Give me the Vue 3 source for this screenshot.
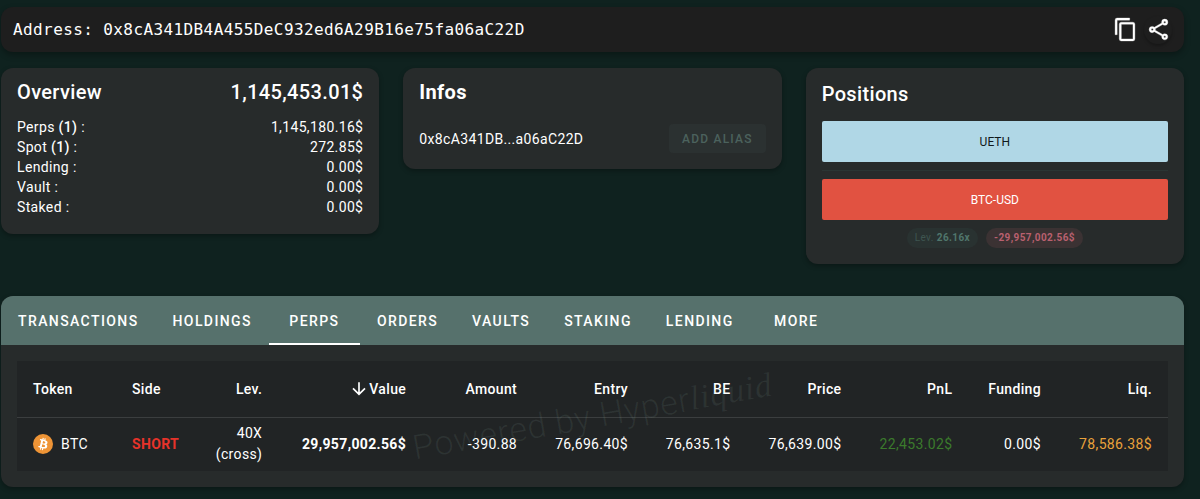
<script setup>
const balances = [
  { label: 'Perps', count: 1, value: '1,145,180.16$' },
  { label: 'Spot', count: 1, value: '272.85$' },
  { label: 'Lending', value: '0.00$' },
  { label: 'Vault', value: '0.00$' },
  { label: 'Staked', value: '0.00$' },
]
const tabs = ['Transactions', 'Holdings', 'Perps', 'Orders', 'Vaults', 'Staking', 'Lending', 'More']
const activeTab = 'Perps'
const columns = ['Token', 'Side', 'Lev.', 'Value', 'Amount', 'Entry', 'BE', 'Price', 'PnL', 'Funding', 'Liq.']
</script>

<template>
  <main class="page">
    <header class="address-bar">
      <span class="address">Address: 0x8cA341DB4A455DeC932ed6A29B16e75fa06aC22D</span>
      <div class="actions">
        <button type="button" class="icon-button" aria-label="Copy address">
          <svg viewBox="0 0 24 24"><path d="M19 21H8V7h11m0-2H8a2 2 0 0 0-2 2v14a2 2 0 0 0 2 2h11a2 2 0 0 0 2-2V7a2 2 0 0 0-2-2m-3-4H4a2 2 0 0 0-2 2v14h2V3h12V1z" /></svg>
        </button>
        <button type="button" class="icon-button raised" aria-label="Share">
          <svg viewBox="0 0 24 24"><path d="M18 16.080c-.76 0-1.440.3-1.960.77L8.910 12.700c.05-.23.09-.46.09-.7s-.04-.47-.09-.7l7.050-4.110c.54.5 1.250.81 2.040.81a3 3 0 1 0-3-3c0 .24.04.47.09.7L8.040 9.810A2.990 2.990 0 0 0 6 9a3 3 0 1 0 0 6c.79 0 1.500-.31 2.040-.81l7.120 4.150c-.05.21-.08.43-.08.66 0 1.610 1.310 2.910 2.920 2.910s2.920-1.300 2.920-2.910A2.920 2.920 0 0 0 18 16.080M18 4a1 1 0 1 1 0 2 1 1 0 0 1 0-2M6 13a1 1 0 1 1 0-2 1 1 0 0 1 0 2m12 7.020a1 1 0 1 1 0-2 1 1 0 0 1 0 2" /></svg>
        </button>
      </div>
    </header>

    <div class="cards">
      <section class="card overview">
        <div class="card-head">
          <h2>Overview</h2>
          <span class="total">1,145,453.01$</span>
        </div>
        <dl class="balances">
          <div v-for="b in balances" :key="b.label" class="balance">
            <dt>{{ b.label }} <b v-if="b.count">({{ b.count }})</b> :</dt>
            <dd>{{ b.value }}</dd>
          </div>
        </dl>
      </section>

      <section class="card">
        <h2 class="strong">Infos</h2>
        <div class="alias">
          <span>0x8cA341DB...a06aC22D</span>
          <button type="button" class="alias-button">ADD ALIAS</button>
        </div>
      </section>

      <section class="card positions">
        <h2>Positions</h2>
        <button type="button" class="position spot">UETH</button>
        <hr />
        <button type="button" class="position short">BTC-USD</button>
        <div class="chips">
          <span class="chip lev">Lev. <b>26.16x</b></span>
          <span class="chip size"><b>-29,957,002.56$</b></span>
        </div>
      </section>
    </div>

    <section class="panel">
      <nav class="tabs" role="tablist">
        <button
          v-for="t in tabs"
          :key="t"
          type="button"
          role="tab"
          class="tab"
          :class="{ active: t === activeTab }"
          :aria-selected="t === activeTab"
        >{{ t }}</button>
      </nav>
      <div class="table-wrap">
        <table>
          <colgroup>
            <col class="w-token" /><col class="w-side" /><col class="w-lev" /><col class="w-value" />
            <col class="w-num" /><col class="w-num" /><col class="w-be" /><col class="w-num" />
            <col class="w-num" /><col class="w-fund" /><col class="w-num" />
          </colgroup>
          <thead>
            <tr>
              <th v-for="c in columns" :key="c" scope="col">
                <svg v-if="c === 'Value'" class="sort" viewBox="0 0 24 24"><path d="M11 4h2v12l5.500-5.500 1.420 1.420L12 19.840l-7.920-7.920L5.500 10.500 11 16z" /></svg>{{ c }}
              </th>
            </tr>
          </thead>
          <tbody>
            <tr>
              <td>
                <span class="token">
                  <svg class="coin" viewBox="0 0 32 32">
                    <circle cx="16" cy="16" r="16" fill="#ee9436" />
                    <path fill="#fff" d="M23.189 14.020c.314-2.096-1.283-3.223-3.465-3.975l.708-2.840-1.728-.43-.69 2.765c-.454-.114-.92-.22-1.385-.326l.695-2.783L15.596 6l-.708 2.839c-.376-.086-.746-.17-1.104-.26l.002-.009-2.384-.595-.46 1.846s1.283.294 1.256.312c.7.175.826.638.805 1.006l-.806 3.235c.048.012.11.030.18.057l-.183-.045-1.130 4.532c-.086.212-.303.531-.793.41.018.025-1.256-.313-1.256-.313l-.858 1.978 2.250.561c.418.105.828.215 1.231.318l-.715 2.872 1.727.43.708-2.840c.472.127.930.245 1.378.357l-.706 2.828 1.728.43.715-2.866c2.948.558 5.164.333 6.097-2.333.752-2.146-.037-3.385-1.588-4.192 1.130-.26 1.980-1.003 2.207-2.538zm-3.950 5.538c-.533 2.147-4.148.986-5.320.695l.950-3.805c1.172.293 4.929.872 4.370 3.110zm.535-5.569c-.487 1.953-3.495.96-4.470.717l.860-3.450c.975.243 4.118.696 3.610 2.733z" />
                  </svg>
                  BTC
                </span>
              </td>
              <td class="side">SHORT</td>
              <td class="lev-cell">40X (cross)</td>
              <td><b>29,957,002.56$</b></td>
              <td>-390.88</td>
              <td>76,696.40$</td>
              <td>76,635.1$</td>
              <td>76,639.00$</td>
              <td class="gain">22,453.02$</td>
              <td>0.00$</td>
              <td class="liq">78,586.38$</td>
            </tr>
          </tbody>
        </table>
        <div class="watermark">Powered by Hyper<i>liquid</i></div>
      </div>
    </section>
  </main>
</template>

<style>
body {
  margin: 0;
  background: #0f221f;
}
</style>

<style scoped>
* {
  box-sizing: border-box;
}
.page {
  padding: 7px 16px 12px 1px;
  color: #fff;
  font: 400 14px/20px Roboto, sans-serif;
  letter-spacing: 0.025em;
}
button {
  border: 0;
  margin: 0;
  padding: 0;
  color: inherit;
  font: inherit;
  cursor: pointer;
}
.address-bar {
  display: flex;
  align-items: center;
  justify-content: space-between;
  height: 45px;
  padding: 0 12px;
  border-radius: 12px;
  background: #1e1e1e;
  box-shadow: 0 3px 6px rgba(0, 0, 0, 0.3);
}
.address {
  font: 16px/24px "DejaVu Sans Mono", monospace;
  letter-spacing: 0.025em;
}
.actions {
  display: flex;
  gap: 5px;
}
.icon-button {
  display: flex;
  align-items: center;
  justify-content: center;
  width: 28px;
  height: 28px;
  border-radius: 50%;
  background: transparent;
}
.icon-button svg {
  display: block;
  width: 25px;
  height: 25px;
  fill: #fff;
  stroke: #fff;
  stroke-width: 0.3;
}
.raised {
  box-shadow: 0 2px 3px rgba(0, 0, 0, 0.25);
}
.cards {
  display: grid;
  grid-template-columns: repeat(3, 1fr);
  align-items: start;
  gap: 24px;
  margin: 16px 0 32px;
}
.card {
  padding: 8px 16px 16px;
  border-radius: 12px;
  background: #272b2b;
  box-shadow: 0 2px 5px rgba(0, 0, 0, 0.3);
}
.overview {
  padding-bottom: 17px;
}
.card-head {
  display: flex;
  justify-content: space-between;
}
h2,
.total {
  margin: 0;
  font-size: 20px;
  line-height: 32px;
  font-weight: 500;
}
h2.strong {
  font-weight: 700;
}
.balances {
  margin: 9px 0 0;
}
.balance {
  display: flex;
  justify-content: space-between;
}
dd {
  margin: 0;
}
b {
  font-weight: 700;
}
dt b {
  font-weight: 500;
}
.alias {
  display: flex;
  align-items: center;
  justify-content: space-between;
  margin-top: 16px;
}
.alias-button {
  height: 29px;
  padding: 0 13px;
  border-radius: 4px;
  background: #2b3131;
  color: #4b625d;
  font-size: 12px;
  font-weight: 500;
  letter-spacing: 0.1em;
}
.positions {
  display: flex;
  flex-direction: column;
  padding-top: 10px;
}
.position {
  height: 41px;
  border-radius: 2px;
  font-size: 12px;
  letter-spacing: 0;
}
.spot {
  margin-top: 11px;
  background: #b0d7e6;
  color: #10191c;
}
.short {
  background: #e15241;
}
hr {
  width: 100%;
  height: 1px;
  margin: 8px 0;
  border: 0;
  background: #2a3534;
}
.chips {
  display: flex;
  justify-content: center;
  gap: 8px;
  margin-top: 8px;
}
.chip {
  padding: 0 8px;
  border-radius: 10px;
  font-size: 10px;
  letter-spacing: 0.04em;
}
.lev {
  background: #293231;
  color: #3e5550;
}
.lev b {
  color: #50766c;
}
.size {
  background: #3b3233;
  color: #b9606f;
}
.panel {
  overflow: hidden;
  border-radius: 12px;
  background: #272b2b;
  box-shadow: 0 2px 5px rgba(0, 0, 0, 0.3);
}
.tabs {
  display: flex;
  height: 49px;
  background: #56716c;
}
.tab {
  min-width: 91px;
  padding: 2px 17px 0;
  border-bottom: 2px solid transparent;
  background: transparent;
  font-weight: 500;
  letter-spacing: 0.1em;
  text-transform: uppercase;
}
.tab.active {
  border-color: #fff;
}
.table-wrap {
  position: relative;
  margin: 16px;
  background: #212425;
}
table {
  width: 100%;
  border-collapse: collapse;
  table-layout: fixed;
}
.w-token { width: 8.6%; }
.w-side { width: 7%; }
.w-lev { width: 7.1%; }
.w-value { width: 12.5%; }
.w-num { width: 9.64%; }
.w-be { width: 8.9%; }
.w-fund { width: 7.7%; }
th,
td {
  padding: 0 16px;
  text-align: right;
  white-space: nowrap;
}
th {
  height: 56px;
  border-bottom: 1px solid #3b3e3f;
  font-weight: 500;
}
td {
  height: 54px;
}
th:nth-child(-n + 2),
td:nth-child(-n + 2) {
  text-align: left;
}
.sort {
  width: 20px;
  height: 20px;
  fill: #fff;
  vertical-align: -5px;
}
.token {
  display: flex;
  align-items: center;
  gap: 8px;
}
.coin {
  width: 20px;
  height: 20px;
}
.side {
  color: #e6332a;
  font-weight: 700;
}
.lev-cell {
  line-height: 21px;
  white-space: normal;
}
.gain {
  color: #3b7a2c;
}
.liq {
  color: #e9a23b;
}
.watermark {
  position: absolute;
  inset: 0;
  display: flex;
  align-items: center;
  justify-content: center;
  transform: rotate(-10deg);
  color: rgba(170, 200, 190, 0.09);
  font-size: 34px;
  font-weight: 300;
  line-height: 40px;
  letter-spacing: 0.02em;
  pointer-events: none;
}
.watermark i {
  font-family: "Liberation Serif", serif;
}
</style>
